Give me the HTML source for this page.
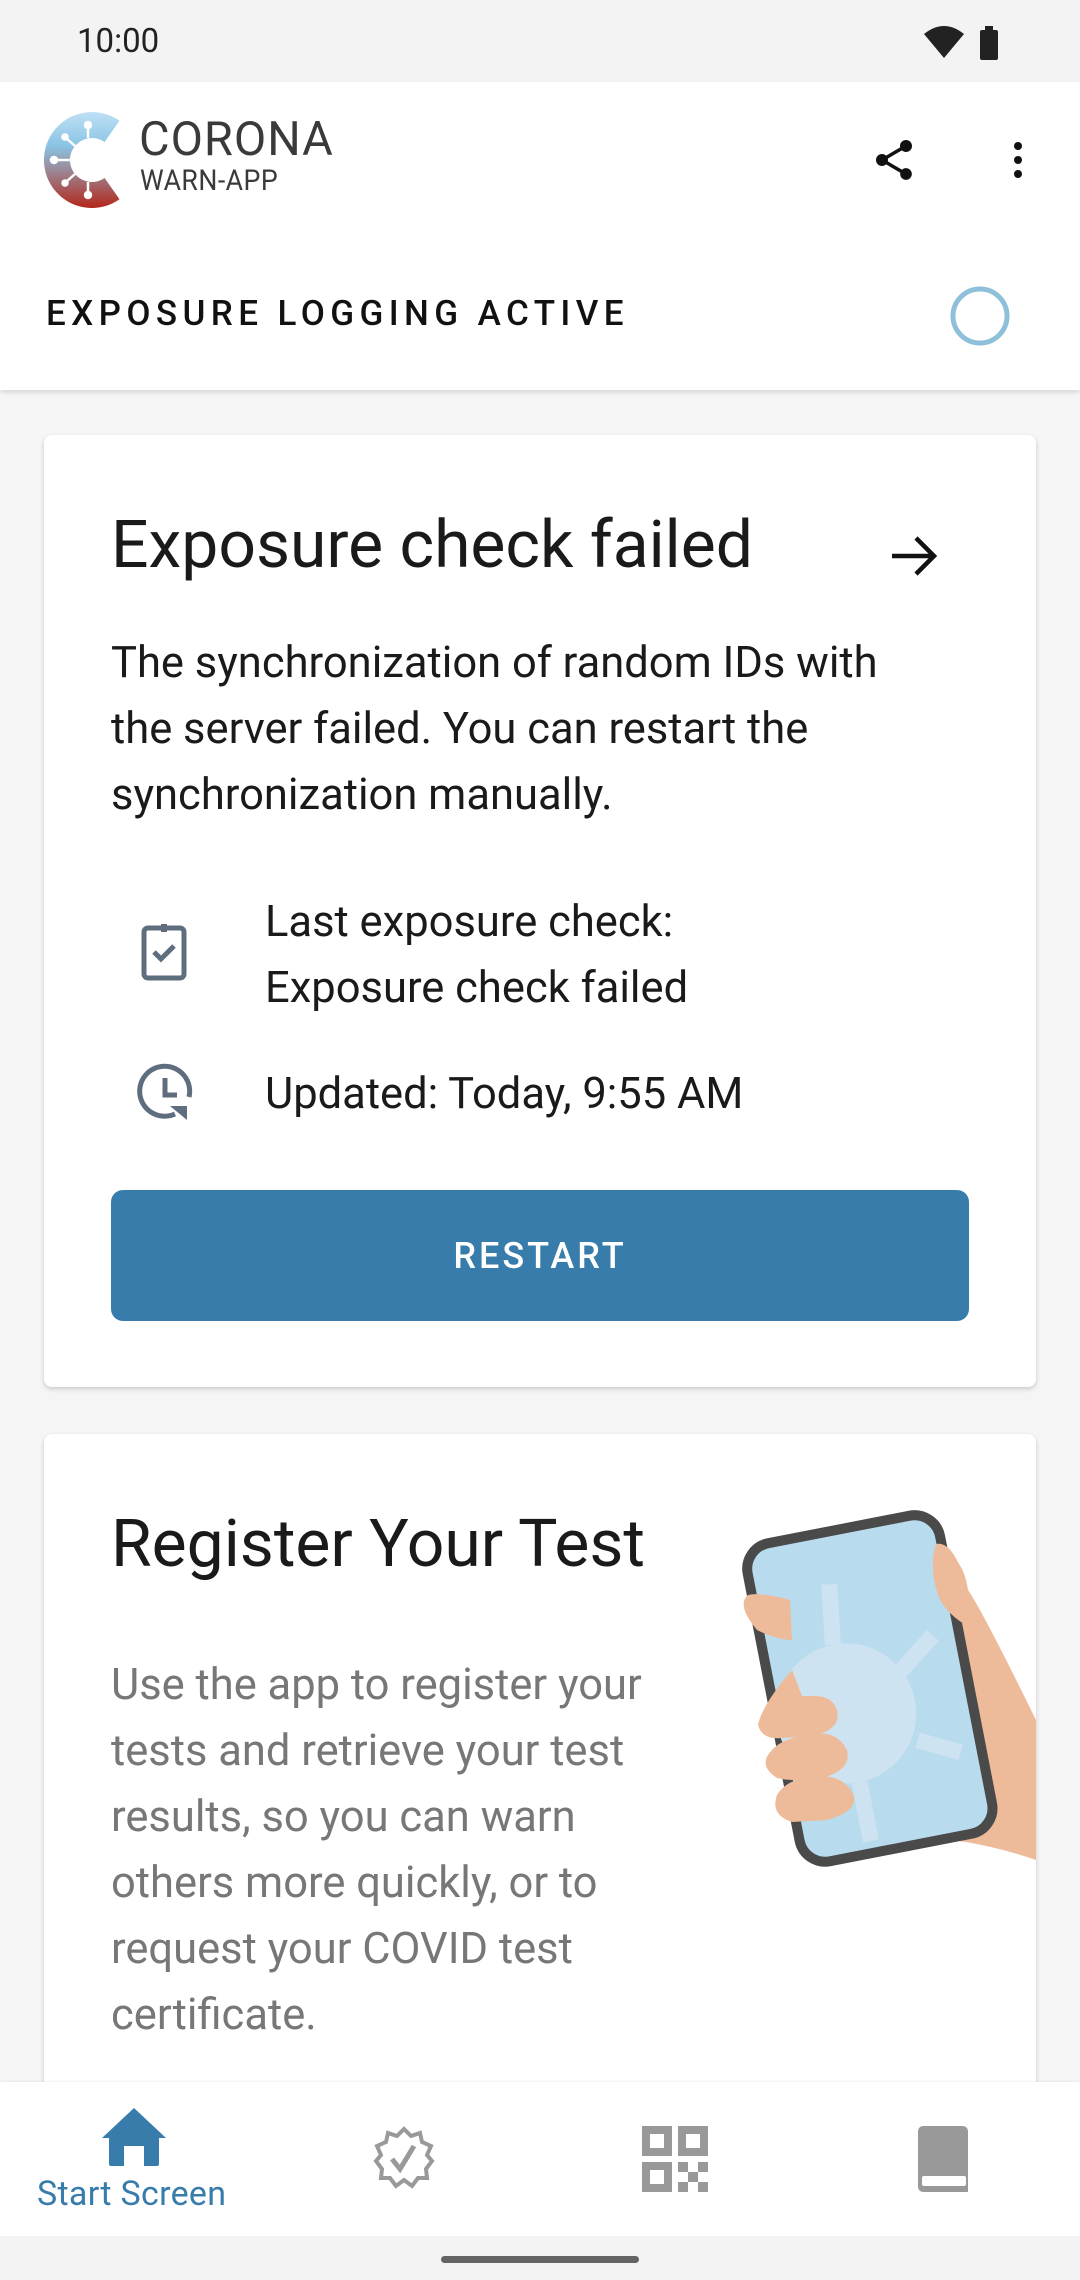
<!DOCTYPE html>
<html><head><meta charset="utf-8"><style>
*{margin:0;padding:0;box-sizing:border-box}
body{width:1080px;height:2280px;overflow:hidden;background:#f5f5f5;font-family:"Roboto","Liberation Sans",sans-serif;position:relative;color:#1a1a1a}
.abs{position:absolute}
.card{position:absolute;background:#fff;border-radius:8px;box-shadow:0 2px 5px rgba(0,0,0,.18);}
</style></head><body>
<div class="abs" style="left:0;top:0;width:1080px;height:82px;background:#f3f3f3"></div>
<div class="abs" style="left:77px;top:22px;font-size:33px;color:#222">10:00</div>
<svg class="abs" style="left:922px;top:24px" width="84" height="40" viewBox="0 0 84 40">
<path d="M2 10 Q22 -6 42 10 L22 34 Z" fill="#222"/>
<rect x="58" y="6" width="18" height="30" rx="2" fill="#222"/><rect x="63" y="2" width="8" height="5" fill="#222"/>
</svg>
<div class="abs" style="left:0;top:82px;width:1080px;height:308px;background:#fff;box-shadow:0 3px 4px rgba(0,0,0,.1)"></div>
<svg class="abs" style="left:42px;top:108px" width="100" height="104" viewBox="0 0 100 104">
<defs><linearGradient id="g" x1="0" y1="0" x2="0" y2="1"><stop offset="0" stop-color="#bfe0f5"/><stop offset=".35" stop-color="#8ac4e4"/><stop offset=".6" stop-color="#9a8a98"/><stop offset="1" stop-color="#b3261a"/></linearGradient></defs>
<path d="M77.5 12.7 A48 48 0 1 0 77.5 91.3 L62.6 70 A22 22 0 1 1 62.6 34 Z" fill="url(#g)"/>
<g stroke="#fff" stroke-width="2.5" fill="#fff"><line x1="46" y1="30" x2="46" y2="18"/><circle cx="46" cy="17" r="3"/><line x1="28" y1="52" x2="14" y2="52"/><circle cx="12" cy="52" r="3"/><line x1="46" y1="74" x2="46" y2="86"/><circle cx="46" cy="87" r="3"/><line x1="33" y1="38" x2="24" y2="30"/><circle cx="23" cy="29" r="2.5"/><line x1="33" y1="66" x2="24" y2="74"/><circle cx="23" cy="75" r="2.5"/></g>
</svg>
<div class="abs" style="left:139px;top:112px;font-size:47px;color:#3a3a3a;letter-spacing:1px">CORONA</div>
<div class="abs" style="left:140px;top:164px;font-size:29px;color:#3a3a3a;letter-spacing:.5px;transform:scaleX(.92);transform-origin:left">WARN-APP</div>
<svg class="abs" style="left:870px;top:136px" width="48" height="48" viewBox="0 0 24 24"><path fill="#111" d="M18 16.08c-.76 0-1.440.3-1.960.77L8.910 12.7c.050-.23.090-.46.090-.7s-.040-.47-.090-.7l7.050-4.110c.540.5 1.250.81 2.040.81 1.660 0 3-1.340 3-3s-1.340-3-3-3-3 1.340-3 3c0 .24.040.47.090.7L8.040 9.810C7.500 9.310 6.790 9 6 9c-1.660 0-3 1.340-3 3s1.340 3 3 3c.79 0 1.500-.31 2.040-.81l7.120 4.160c-.050.21-.080.43-.080.65 0 1.610 1.310 2.920 2.920 2.920s2.920-1.310 2.920-2.920-1.310-2.920-2.920-2.920z"/></svg>
<svg class="abs" style="left:994px;top:136px" width="48" height="48" viewBox="0 0 24 24"><circle cx="12" cy="5" r="2" fill="#111"/><circle cx="12" cy="12" r="2" fill="#111"/><circle cx="12" cy="19" r="2" fill="#111"/></svg>
<div class="abs" style="left:46px;top:293px;font-size:35px;letter-spacing:5.4px;color:#111;font-weight:500">EXPOSURE LOGGING ACTIVE</div>
<svg class="abs" style="left:948px;top:284px" width="64" height="64"><circle cx="32" cy="32" r="27" fill="none" stroke="#8fc0da" stroke-width="5"/></svg>

<div class="card" style="left:44px;top:435px;width:992px;height:952px"></div>
<div class="abs" style="left:111px;top:507px;font-size:66px;color:#1a1a1a">Exposure check failed</div>
<svg class="abs" style="left:890px;top:534px" width="50" height="44" viewBox="0 0 50 44"><path d="M2 22 H44 M26 4 L44 22 L26 40" stroke="#111" stroke-width="4.5" fill="none"/></svg>
<div class="abs" style="left:111px;top:630px;font-size:43.5px;line-height:66px;color:#1a1a1a;width:800px">The synchronization of random IDs with the server failed. You can restart the synchronization manually.</div>
<svg class="abs" style="left:140px;top:922px" width="50" height="62" viewBox="0 0 50 62"><rect x="4" y="6" width="40" height="50" rx="4" fill="none" stroke="#5f6e7e" stroke-width="5"/><rect x="21" y="2" width="6" height="8" fill="#5f6e7e"/><path d="M14 30 L21 37 L34 24" stroke="#5f6e7e" stroke-width="5" fill="none"/></svg>
<svg class="abs" style="left:135px;top:1062px" width="62" height="62" viewBox="0 0 62 62"><path d="M54 35 A25 25 0 1 0 40 52" fill="none" stroke="#5f6e7e" stroke-width="5"/><path d="M30 16 V33 H42" stroke="#5f6e7e" stroke-width="5" fill="none"/><path d="M35 44 L52 44 L52 58 Z" fill="#5f6e7e"/></svg>
<div class="abs" style="left:265px;top:889px;font-size:43.5px;line-height:66px;color:#1a1a1a">Last exposure check:<br>Exposure check failed</div>
<div class="abs" style="left:265px;top:1061px;font-size:43.5px;line-height:66px;color:#1a1a1a">Updated: Today, 9:55 AM</div>
<div class="abs" style="left:111px;top:1190px;width:858px;height:131px;background:#377caa;border-radius:12px;color:#fff;font-size:36px;letter-spacing:3px;font-weight:500;display:flex;align-items:center;justify-content:center">RESTART</div>

<div class="card" style="left:44px;top:1434px;width:992px;height:700px"></div>
<div class="abs" style="left:111px;top:1506px;font-size:66px;color:#1a1a1a">Register Your Test</div>
<div class="abs" style="left:111px;top:1652px;font-size:43.5px;line-height:66px;color:#777;width:570px">Use the app to register your tests and retrieve your test results, so you can warn others more quickly, or to request your COVID test certificate.</div>
<svg class="abs" style="left:732px;top:1510px" width="304" height="360" viewBox="0 0 304 360">
<path d="M200 40 Q230 40 236 80 Q250 100 304 210 L304 350 Q260 335 220 330 L160 120 Z" fill="#edbb99"/>
<g transform="rotate(-11 130 180)"><rect x="40" y="18" width="196" height="324" rx="26" fill="#b9dbee" stroke="#4a4a4a" stroke-width="10"/>
<circle cx="110" cy="200" r="70" fill="#cde3f1"/><path d="M110 130 L118 70 M170 170 L210 140 M175 240 L215 260 M110 270 L110 330" stroke="#cde3f1" stroke-width="16"/></g>
<path d="M204 34 Q222 30 236 80 L244 120 Q220 110 208 90 Q196 60 204 34 Z" fill="#edbb99"/>
<path d="M16 85 Q4 95 25 120 Q45 130 60 130 L58 90 Q30 82 16 85 Z" fill="#edbb99"/>
<path d="M60 160 Q30 195 26 215 Q30 230 50 228 L80 226 Q110 220 105 200 Q100 185 80 186 L70 186 Z" fill="#edbb99"/>
<path d="M40 240 Q25 255 45 268 Q60 272 90 268 Q120 260 115 240 Q105 220 80 224 Q50 228 40 240 Z" fill="#edbb99"/>
<path d="M45 285 Q38 305 60 312 L95 310 Q130 300 120 282 Q110 265 85 266 Q55 268 45 285 Z" fill="#edbb99"/>
</svg>

<div class="abs" style="left:0;top:2082px;width:1080px;height:154px;background:#fff;box-shadow:0 -1px 2px rgba(0,0,0,.05)"></div>
<svg class="abs" style="left:102px;top:2108px" width="64" height="60" viewBox="0 0 64 60"><path d="M32 0 L64 30 H57 V56 Q57 58 55 58 H42 V38 H22 V58 H9 Q7 58 7 56 V30 H0 Z" fill="#377caa"/></svg>
<div class="abs" style="left:37px;top:2174px;font-size:34px;color:#377caa;letter-spacing:.3px">Start Screen</div>
<svg class="abs" style="left:372px;top:2126px" width="64" height="64" viewBox="0 0 64 64"><path d="M32 3 L39 10 L48 7 L50 16 L59 20 L55 29 L60 35 L54 43 L55 52 L46 52 L40 60 L32 54 L24 60 L18 52 L9 52 L10 43 L4 35 L9 29 L5 20 L14 16 L16 7 L25 10 Z" fill="none" stroke="#999" stroke-width="4"/><path d="M20 33 L28 43 L42 20" fill="none" stroke="#999" stroke-width="5"/></svg>
<svg class="abs" style="left:642px;top:2126px" width="66" height="66" viewBox="0 0 66 66"><g fill="#999"><path d="M0 0H30V30H0Z M8 8V22H22V8Z" fill-rule="evenodd"/><path d="M36 0H66V30H36Z M44 8V22H58V8Z" fill-rule="evenodd"/><path d="M0 36H30V66H0Z M8 44V58H22V44Z" fill-rule="evenodd"/><rect x="36" y="36" width="10" height="10"/><rect x="56" y="36" width="10" height="10"/><rect x="46" y="46" width="10" height="10"/><rect x="36" y="56" width="10" height="10"/><rect x="56" y="56" width="10" height="10"/></g></svg>
<svg class="abs" style="left:918px;top:2126px" width="52" height="68" viewBox="0 0 52 68"><path d="M6 0 H44 Q50 0 50 6 V66 H6 Q0 66 0 60 V6 Q0 0 6 0 Z" fill="#999"/><rect x="4" y="50" width="44" height="10" rx="2" fill="#fff"/></svg>
<div class="abs" style="left:0;top:2236px;width:1080px;height:44px;background:#f3f3f3"></div>
<div class="abs" style="left:441px;top:2256px;width:198px;height:7px;border-radius:4px;background:#646464"></div>
</body></html>
